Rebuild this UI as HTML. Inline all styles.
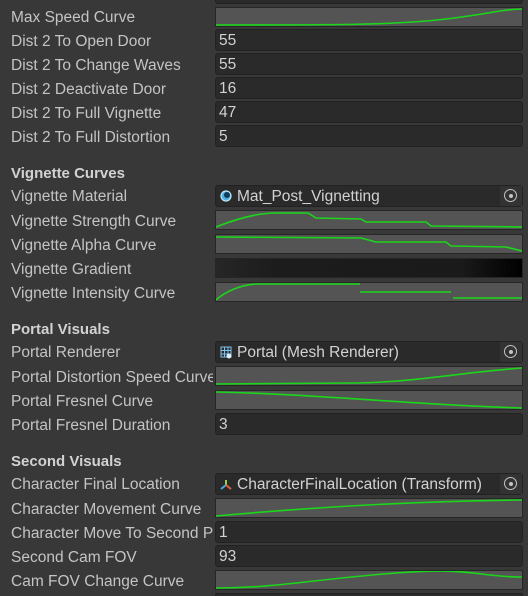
<!DOCTYPE html>
<html style="overflow:hidden;height:596px"><head><style>
body{margin:0;width:528px;height:596px;background:#383838;overflow:hidden;position:relative;font-family:"Liberation Sans",sans-serif;font-size:15.5px;color:#c4c4c4}
.l{position:absolute;left:11px;width:202px;white-space:nowrap;overflow:hidden;line-height:21px}
.h{position:absolute;left:11px;font-weight:bold;color:#d2d2d2;line-height:21px;font-size:15px}
.f{position:absolute;left:215px;width:303px;height:20px;background:#2a2a2a;border:1px solid #222;border-radius:3px;color:#d2d2d2;line-height:21px;padding-left:3px;box-sizing:content-box}
.c{position:absolute;left:215px;width:306px;height:18px;background:#545454;border:1px solid #262626}
.c svg{display:block}
.c path{fill:none;stroke:#1bd61b;stroke-width:1.6}
.o{position:absolute;left:215px;width:308px;height:22px;background:#2a2a2a;border:1px solid #222;border-radius:3px;box-sizing:border-box;line-height:21px;color:#d2d2d2}
.o .t{position:absolute;left:21px;top:0}
.o .p{position:absolute;right:0;top:0;width:22px;height:20px;background:#333}
.o .p:after{content:"";position:absolute;left:4px;top:3px;width:11px;height:11px;border:1.5px solid #c4c4c4;border-radius:50%}
.o .p:before{content:"";position:absolute;left:9px;top:8px;width:4px;height:4px;background:#c4c4c4;border-radius:50%;z-index:1}
</style></head><body>
<div class="f" style="top:-18px"></div>
<div class="l" style="top:7px">Max Speed Curve</div>
<div class="c" style="top:7px"><svg width="306" height="18"><path d="M0,17 C120,17 180,17 230,11 S280,2 306,1"/></svg></div>
<div class="l" style="top:31px">Dist 2 To Open Door</div><div class="f" style="top:29px">55</div>
<div class="l" style="top:55px">Dist 2 To Change Waves</div><div class="f" style="top:53px">55</div>
<div class="l" style="top:79px">Dist 2 Deactivate Door</div><div class="f" style="top:77px">16</div>
<div class="l" style="top:103px">Dist 2 To Full Vignette</div><div class="f" style="top:101px">47</div>
<div class="l" style="top:127px">Dist 2 To Full Distortion</div><div class="f" style="top:125px">5</div>

<div class="h" style="top:163px">Vignette Curves</div>
<div class="l" style="top:186px">Vignette Material</div>
<div class="o" style="top:185px"><svg style="position:absolute;left:4px;top:4px" width="12" height="12"><circle cx="6" cy="6" r="5" fill="#4fb0e0" stroke="#bfe6f8" stroke-width="1.2"/><circle cx="7" cy="5" r="3" fill="#0e3c5a"/></svg><span class="t">Mat_Post_Vignetting</span><div class="p"></div></div>
<div class="l" style="top:211px">Vignette Strength Curve</div>
<div class="c" style="top:210px"><svg width="306" height="18"><path d="M0,16 C20,8 40,2 60,2 L92,2 L100,7 L145,8 L150,11 L210,11 L215,15 L306,16"/></svg></div>
<div class="l" style="top:235px">Vignette Alpha Curve</div>
<div class="c" style="top:234px"><svg width="306" height="18"><path d="M0,2 L145,3 L160,7 L230,7 L235,11 L290,12 L306,16"/></svg></div>
<div class="l" style="top:259px">Vignette Gradient</div>
<div class="c" style="top:258px;background:linear-gradient(90deg,#262626,#1c1c1c 20%,#1a1a1a 80%,#000)"></div>
<div class="l" style="top:283px">Vignette Intensity Curve</div>
<div class="c" style="top:282px"><svg width="306" height="18"><path d="M0,17 C10,8 25,2 40,1 L144,1 M144,9 L235,9 M237,15 L306,15"/></svg></div>

<div class="h" style="top:319px">Portal Visuals</div>
<div class="l" style="top:342px">Portal Renderer</div>
<div class="o" style="top:341px"><svg style="position:absolute;left:4px;top:4px" width="13" height="13"><path d="M1,1H11V11H1ZM1,4.5H11M1,8H11M4.5,1V11M8,1V11" fill="none" stroke="#7fc4f0" stroke-width="1"/><circle cx="9" cy="10" r="2.5" fill="#dfefff"/></svg><span class="t">Portal (Mesh Renderer)</span><div class="p"></div></div>
<div class="l" style="top:367px">Portal Distortion Speed Curve</div>
<div class="c" style="top:366px"><svg width="306" height="18"><path d="M0,17 L140,16 C200,15 240,6 306,1"/></svg></div>
<div class="l" style="top:391px">Portal Fresnel Curve</div>
<div class="c" style="top:390px"><svg width="306" height="18"><path d="M0,1 C100,3 200,14 306,17"/></svg></div>
<div class="l" style="top:415px">Portal Fresnel Duration</div><div class="f" style="top:413px">3</div>

<div class="h" style="top:451px">Second Visuals</div>
<div class="l" style="top:474px">Character Final Location</div>
<div class="o" style="top:473px"><svg style="position:absolute;left:4px;top:5px" width="12" height="11"><path d="M6,1V6" stroke-width="2" fill="none" stroke="#9ad04a"/><path d="M6,6L1,10" stroke="#4aa8e0" stroke-width="2"/><path d="M6,6L11,10" stroke="#e0603a" stroke-width="2"/></svg><span class="t">CharacterFinalLocation (Transform)</span><div class="p"></div></div>
<div class="l" style="top:499px">Character Movement Curve</div>
<div class="c" style="top:498px"><svg width="306" height="18"><path d="M0,17 C100,8 200,2 306,1"/></svg></div>
<div class="l" style="top:523px">Character Move To Second Pos</div><div class="f" style="top:521px">1</div>
<div class="l" style="top:547px">Second Cam FOV</div><div class="f" style="top:545px">93</div>
<div class="l" style="top:571px">Cam FOV Change Curve</div>
<div class="c" style="top:570px"><svg width="306" height="18"><path d="M0,17 C60,17 100,8 180,2 S260,6 306,6"/></svg></div>
<div class="f" style="top:593px;height:2px"></div>
</body></html>
